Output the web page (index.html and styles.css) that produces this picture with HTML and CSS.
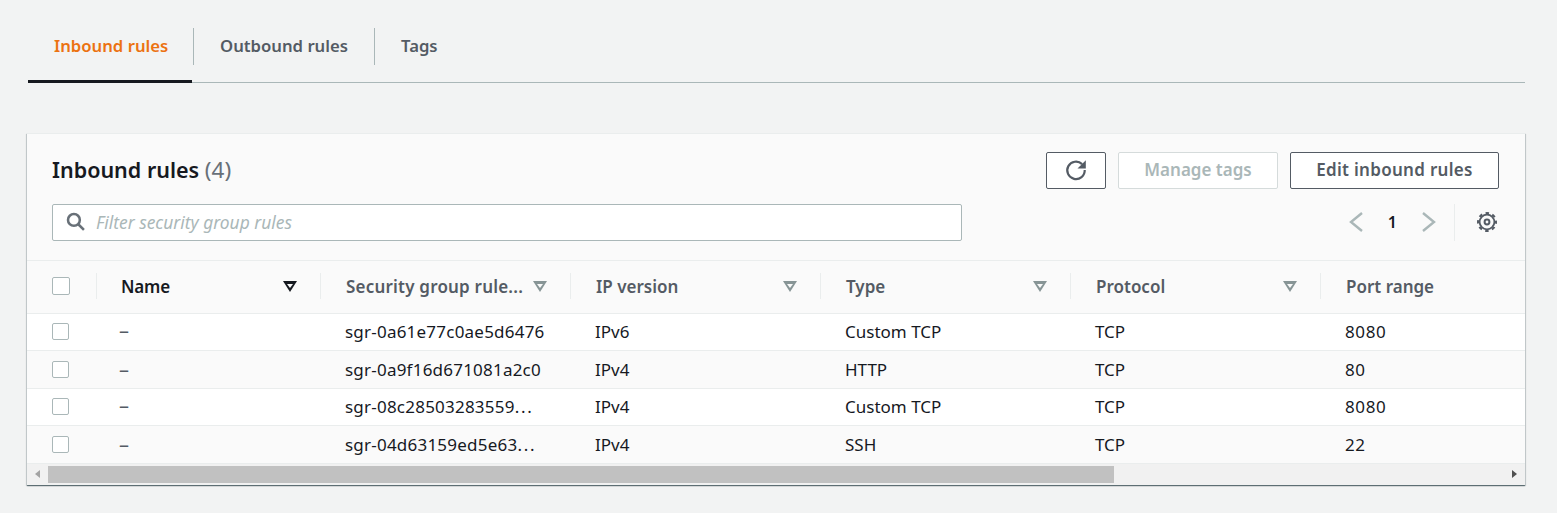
FILE: index.html
```html
<!DOCTYPE html>
<html lang="en">
<head>
  <meta charset="UTF-8" />
  <title>Inbound rules</title>
  <link rel="stylesheet" href="styles.css">
</head>
<body>
  <div class="tabs">
    <a class="tab active">Inbound rules</a>
    <a class="tab">Outbound rules</a>
    <a class="tab">Tags</a>
  </div>

  <div class="card">
    <div class="card-head">
      <h2>Inbound rules <span class="count">(4)</span></h2>
      <div class="actions">
        <button class="btn btn-icon">
          <svg width="24" height="24" viewBox="0 0 22 22" fill="none" stroke="#545b64" stroke-width="2">
            <path d="M16.6 5.6A8 8 0 1 0 19 11"/>
            <path d="M20 2V9.6H12.4z" fill="#545b64" stroke="none"/>
          </svg>
        </button>
        <button class="btn btn-manage" disabled>Manage tags</button>
        <button class="btn btn-edit">Edit inbound rules</button>
      </div>
    </div>

    <div class="filter-row">
      <div class="search">
        <svg width="19" height="19" viewBox="0 0 18 18" fill="none" stroke="#687078" stroke-width="2.4">
          <circle cx="7.5" cy="7.5" r="5.6"/>
          <path d="M11.6 11.6L17 17"/>
        </svg>
        <span>Filter security group rules</span>
      </div>
      <div class="pager">
        <svg width="14" height="20" viewBox="0 0 14 20" fill="none" stroke="#aab7b8" stroke-width="2.4"><path d="M13 1L2 10l11 9"/></svg>
        <span class="page-num">1</span>
        <svg width="14" height="20" viewBox="0 0 14 20" fill="none" stroke="#aab7b8" stroke-width="2.4"><path d="M1 1l11 9-11 9"/></svg>
      </div>
      <div class="prefs">
        <svg width="22" height="22" viewBox="0 0 22 22" fill="none" stroke="#545b64">
          <circle cx="11" cy="11" r="2.4" stroke-width="2"/>
          <circle cx="11" cy="11" r="7.4" stroke-width="1.8"/>
          <circle cx="11" cy="11" r="9" stroke-width="2" stroke-dasharray="3.54 3.53" stroke-dashoffset="1.77"/>
        </svg>
      </div>
    </div>

    <div class="table-wrap">
      <table class="rules">
        <colgroup>
          <col class="c-check"><col class="c-name"><col class="c-wide"><col class="c-wide"><col class="c-wide"><col class="c-wide"><col class="c-wide">
        </colgroup>
        <thead>
          <tr>
            <th class="cell-check"><span class="check check-all"></span></th>
            <th class="sorted"><div class="th-in"><span>Name</span><i class="caret"></i></div></th>
            <th><div class="th-in"><span class="th-cut">Security group rule...</span><i class="caret"></i></div></th>
            <th><div class="th-in"><span>IP version</span><i class="caret"></i></div></th>
            <th><div class="th-in"><span>Type</span><i class="caret"></i></div></th>
            <th><div class="th-in"><span>Protocol</span><i class="caret"></i></div></th>
            <th><div class="th-in"><span>Port range</span></div></th>
          </tr>
        </thead>
        <tbody>
          <tr class="r1">
            <td class="cell-check"><span class="check"></span></td>
            <td class="dash">–</td><td class="rule-id">sgr-0a61e77c0ae5d6476</td><td>IPv6</td><td>Custom TCP</td><td>TCP</td><td class="num">8080</td>
          </tr>
          <tr class="r2">
            <td class="cell-check"><span class="check"></span></td>
            <td class="dash">–</td><td class="rule-id">sgr-0a9f16d671081a2c0</td><td>IPv4</td><td>HTTP</td><td>TCP</td><td class="num">80</td>
          </tr>
          <tr class="r1">
            <td class="cell-check"><span class="check"></span></td>
            <td class="dash">–</td><td class="rule-id">sgr-08c28503283559<span class="dots">...</span></td><td>IPv4</td><td>Custom TCP</td><td>TCP</td><td class="num">8080</td>
          </tr>
          <tr class="r2">
            <td class="cell-check"><span class="check"></span></td>
            <td class="dash">–</td><td class="rule-id">sgr-04d63159ed5e63<span class="dots">...</span></td><td>IPv4</td><td>SSH</td><td>TCP</td><td class="num">22</td>
          </tr>
        </tbody>
      </table>
    </div>

    <div class="hscroll">
      <span class="arrow arrow-left"></span>
      <div class="track"><div class="thumb"></div></div>
      <span class="arrow arrow-right"></span>
    </div>
  </div>
</body>
</html>
```

FILE: styles.css
```css
* {
    box-sizing: border-box;
}

body {
    margin: 0;
    height: 513px;
    overflow: hidden;
    background-color: #f2f3f3;
    color: #16191f;
    font-family: "Noto Sans", "Open Sans", sans-serif;
    font-size: 17px;
}

/* tabs */
.tabs {
    display: flex;
    margin: 0 32px 0 28px;
    height: 83px;
    padding-top: 28px;
    border-bottom: 1px solid #aab7b8;
}

.tab {
    height: 37px;
    line-height: 36px;
    padding: 0 26px;
    font-size: 16.7px;
    font-weight: 600;
    color: #545b64;
    border-left: 1px solid #aab7b8;
    white-space: nowrap;
}

.tab:first-child {
    border-left: 0;
    width: 165px;
}

.tab.active {
    color: #ec7211;
    position: relative;
}

.tab.active::after {
    content: "";
    position: absolute;
    left: 0;
    right: 1px;
    top: 52px;
    height: 3px;
    background-color: #16191f;
}

/* card */
.card {
    margin: 50px 32px 0 27px;
    height: 352px;
    background-color: #fafafa;
    border-top: 1px solid #eaeded;
    box-shadow: 0 1px 1px 0 rgba(0, 28, 36, 0.5), 1px 1px 1px 0 rgba(0, 28, 36, 0.12), -1px 1px 1px 0 rgba(0, 28, 36, 0.12);
}

.card-head {
    display: flex;
    justify-content: space-between;
    align-items: center;
    padding: 17px 26px 0 25px;
    height: 55px;
}

.card-head h2 {
    margin: 0 0 2px;
    font-size: 21.5px;
    font-weight: 600;
    line-height: 35px;
}

.count {
    font-weight: 400;
    font-size: 22.5px;
    color: #687078;
}

.actions {
    display: flex;
    gap: 12px;
}

.btn {
    height: 37px;
    padding: 0 0 2px;
    font-family: inherit;
    font-size: 17px;
    font-weight: 600;
    color: #545b64;
    background-color: #fff;
    border: 1px solid #545b64;
    border-radius: 2px;
}

.btn-manage {
    width: 160px;
}

.btn-edit {
    width: 209px;
    letter-spacing: 0.3px;
}

.btn-icon {
    width: 60px;
    padding: 0;
    display: flex;
    align-items: center;
    justify-content: center;
}

.btn:disabled {
    color: #aab7b8;
    border-color: #d5dbdb;
}

.filter-row {
    display: flex;
    align-items: center;
    margin-top: 15px;
    padding: 0 27px 0 25px;
    height: 37px;
}

.search {
    display: flex;
    align-items: center;
    gap: 11px;
    width: 910px;
    height: 37px;
    padding: 0 0 2px 13px;
    background-color: #fff;
    border: 1px solid #aab7b8;
    border-radius: 2px;
    font-size: 17.4px;
    font-style: italic;
    color: #aab7b8;
}

.pager {
    display: flex;
    align-items: center;
    margin-left: auto;
    gap: 25px;
    padding: 0 18px 2px 0;
    height: 37px;
    border-right: 1px solid #eaeded;
}

.page-num {
    font-weight: 600;
    font-size: 16px;
}

.prefs {
    display: flex;
    margin: 0 0 2px 21px;
}

/* table, wider than the card so it gets cut off on the right */
.table-wrap {
    overflow: hidden;
    margin-top: 19px;
}

.rules {
    width: 1543px;
    border-collapse: collapse;
    table-layout: fixed;
}

.c-check {
    width: 69px;
}

.c-name {
    width: 224px;
}

.c-wide {
    width: 250px;
}

.rules th {
    height: 53px;
    padding: 0 0 2px;
    text-align: left;
    font-weight: 600;
    color: #545b64;
    border-top: 1px solid #eaeded;
    border-bottom: 1px solid #eaeded;
}

.rules th.sorted {
    color: #16191f;
    letter-spacing: -0.2px;
}

.rules th.cell-check {
    padding-left: 25px;
}

.th-cut {
    letter-spacing: 0.2px;
}

.th-in {
    display: flex;
    justify-content: space-between;
    align-items: center;
    height: 26px;
    padding: 0 23px 0 25px;
    border-left: 1px solid #eaeded;
    white-space: nowrap;
}

.sorted .th-in {
    padding-left: 24px;
}

.caret {
    width: 0;
    height: 0;
    border-left: 7px solid transparent;
    border-right: 7px solid transparent;
    border-top: 11px solid #879596;
    position: relative;
}

/* the hole in the sort triangle */
.caret::after {
    content: "";
    position: absolute;
    left: -3px;
    top: -8px;
    border-left: 3px solid transparent;
    border-right: 3px solid transparent;
    border-top: 4px solid #fafafa;
}

.sorted .caret {
    border-top-color: #16191f;
}

.rules td {
    padding: 0 0 0 25px;
    border-bottom: 1px solid #eaeded;
    white-space: nowrap;
}

.rules .rule-id {
    letter-spacing: 0.22px;
}

.dots {
    letter-spacing: 1.8px;
}

.rules .num {
    letter-spacing: 0.6px;
}

.rules .dash {
    padding-left: 23px;
    font-size: 20px;
    line-height: 20px;
    color: #545b64;
}

.r1 td {
    height: 37px;
    padding-bottom: 2px;
}

.r2 td {
    height: 38px;
}

.r1 {
    background-color: #fff;
}

.check {
    display: block;
    width: 17px;
    height: 17px;
    background-color: #fff;
    border: 1px solid #aab7b8;
    border-radius: 2px;
}

.check-all {
    width: 18px;
    height: 18px;
}

/* scrollbar at the bottom of the table */
.hscroll {
    display: flex;
    align-items: center;
    height: 21px;
    padding-bottom: 1px;
    background-color: #f1f1f1;
}

.track {
    flex: 1;
    height: 17px;
}

.thumb {
    width: 1066px;
    height: 17px;
    background-color: #c1c1c1;
}

.arrow {
    width: 21px;
    display: flex;
    justify-content: center;
}

.arrow::before {
    content: "";
    border-top: 4px solid transparent;
    border-bottom: 4px solid transparent;
}

.arrow-left::before {
    border-right: 5px solid #a3a3a3;
}

.arrow-right::before {
    border-left: 5px solid #505050;
}
```
